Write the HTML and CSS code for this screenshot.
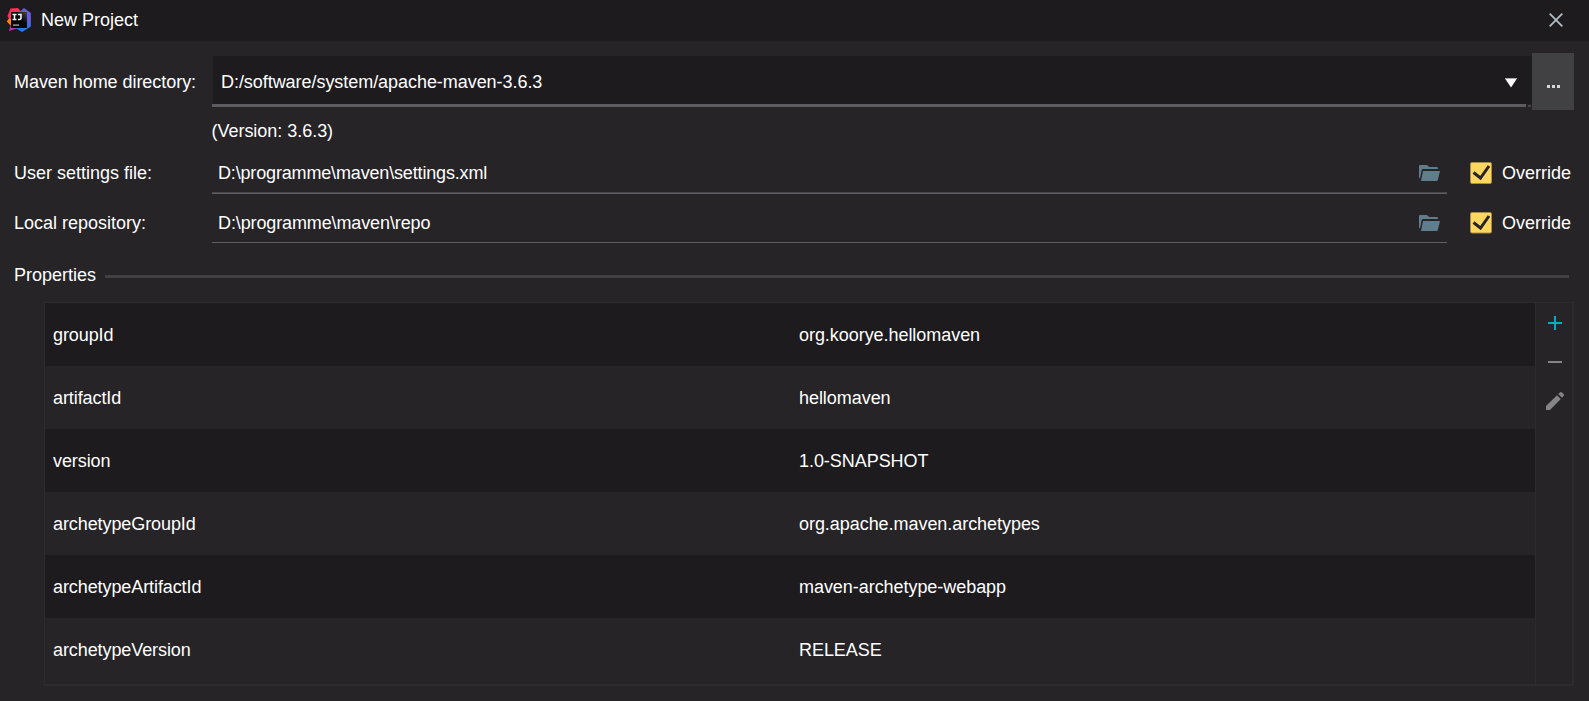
FILE: index.html
```
<!DOCTYPE html>
<html lang="en">
<head>
<meta charset="utf-8">
<title>New Project</title>
<link rel="stylesheet" href="styles.css">
</head>
<body>
<div class="dialog">
  <header class="titlebar">
    <svg class="logo" width="24" height="24" viewBox="0 0 24 24">
      <defs>
        <linearGradient id="warm" x1="0" y1="0" x2="0" y2="1"><stop offset="0" stop-color="#ff2d55"/><stop offset=".45" stop-color="#fe2f62"/><stop offset="1" stop-color="#a03bc8"/></linearGradient>
        <linearGradient id="cool" x1="1" y1="0" x2=".6" y2="1"><stop offset="0" stop-color="#4a6ae6"/><stop offset=".4" stop-color="#6a5bdc"/><stop offset="1" stop-color="#1f78ef"/></linearGradient>
        <linearGradient id="tile" x1="1" y1="0" x2="0" y2="1"><stop offset="0" stop-color="#4a4850"/><stop offset=".4" stop-color="#08080a"/><stop offset="1" stop-color="#000"/></linearGradient>
      </defs>
      <path fill="#fc801d" d="M3 9 0 13.500 3.500 17.500 6 16V9z"/>
      <path fill="url(#warm)" d="M3.500.5 11 0 15 5V19L2 23 4.500 15 .500 8z"/>
      <path fill="url(#cool)" d="M13 3.500 17 0 23.900 5V18.500L15 24 8.500 20z"/>
      <path fill="#fc801d" d="M2.500 10 0 13.500 4 17V12z"/>
      <path fill="url(#tile)" d="M4 4h16v16H4z"/>
      <path fill="none" stroke="#fff" stroke-width="1.500" d="M5.500 6.600h4M7.500 6.600v5M5.500 11.400h4M11 6.600h3v3.300q0 1.500-1.500 1.500H11"/>
      <path fill="#bbb" d="M6 16.500h6v1.200H6z"/>
    </svg>
    <h1 class="title">New Project</h1>
    <svg class="close" width="14" height="14" viewBox="0 0 14 14"><path d="M.7.7l12.600 12.600M13.300.7.7 13.300"/></svg>
  </header>

  <main class="form">
    <div class="home-row">
      <span class="label">Maven home directory:</span>
      <div class="combo">
        <span class="combo-value">D:/software/system/apache-maven-3.6.3</span>
        <svg class="arrow" width="12" height="10" viewBox="0 0 12 10"><path fill="#fff" d="M0 .5h12L6 9.500z"/><path fill="#aaa" d="M0 0h12v1H0z"/></svg>
      </div>
      <button class="browse"><svg width="13" height="3" viewBox="0 0 13 3"><path fill="#d5d5da" d="M0 0h3v3H0zM5 0h3v3H5zM10 0h3v3h-3z"/></svg></button>
    </div>
    <div class="version">(Version: 3.6.3)</div>

    <div class="path-row">
      <span class="label">User settings file:</span>
      <div class="field thick">
        <span>D:\programme\maven\settings.xml</span>
        <svg class="folder" width="21" height="16" viewBox="0 0 21 16"><path d="M1 0h7l2.200 2H18q1 0 1 1.500V4H4Q3 4 2.700 5L1 13.500q-1-.5-1-1.500V1Q0 0 1 0zM4 6h17l-2.200 9q-.3 1-1.300 1H2z"/></svg>
      </div>
      <svg class="check" width="22" height="22" viewBox="0 0 22 22"><rect x=".5" y=".5" width="21" height="21" rx="1.500"/><path d="M3.500 10.500 10.500 16 19 4"/></svg>
      <span class="override">Override</span>
    </div>
    <div class="path-row">
      <span class="label">Local repository:</span>
      <div class="field thin">
        <span>D:\programme\maven\repo</span>
        <svg class="folder" width="21" height="16" viewBox="0 0 21 16"><path d="M1 0h7l2.200 2H18q1 0 1 1.500V4H4Q3 4 2.700 5L1 13.500q-1-.5-1-1.500V1Q0 0 1 0zM4 6h17l-2.200 9q-.3 1-1.300 1H2z"/></svg>
      </div>
      <svg class="check" width="22" height="22" viewBox="0 0 22 22"><rect x=".5" y=".5" width="21" height="20.500" rx="1.500"/><path d="M3.500 10.500 10.500 16 19 4"/></svg>
      <span class="override">Override</span>
    </div>

    <div class="section"><span>Properties</span><i class="rule"></i></div>

    <div class="panel">
      <div class="table">
        <div class="row"><span>groupId</span><span>org.koorye.hellomaven</span></div>
        <div class="row"><span>artifactId</span><span>hellomaven</span></div>
        <div class="row"><span>version</span><span>1.0-SNAPSHOT</span></div>
        <div class="row"><span>archetypeGroupId</span><span>org.apache.maven.archetypes</span></div>
        <div class="row"><span>archetypeArtifactId</span><span>maven-archetype-webapp</span></div>
        <div class="row"><span>archetypeVersion</span><span>RELEASE</span></div>
      </div>
      <div class="tools">
        <svg width="14" height="14" viewBox="0 0 14 14"><path fill="#00acc1" d="M6 0h2v6h6v2H8v6H6V8H0V6h6z"/></svg>
        <svg width="14" height="2" viewBox="0 0 14 2"><path fill="#858585" d="M0 0h14v2H0z"/></svg>
        <svg width="18" height="18" viewBox="0 0 18 18"><path fill="#858585" d="M0 14 11 3.200 14.800 7 4 18H0zM12.200 2 14 .4q1-.8 2 0l1.600 1.600q.8 1 0 2L16 5.800z"/></svg>
      </div>
    </div>
  </main>
</div>
</body>
</html>
```
FILE: styles.css
```
* { box-sizing: border-box; }
body {
  margin: 0;
  background: #262427;
  color: #fff;
  font: 18px/20px "Liberation Sans", Arial, sans-serif;
}
svg { display: block; flex: none; }
.dialog { width: 1589px; height: 701px; overflow: hidden; }
.titlebar {
  display: flex;
  align-items: flex-start;
  height: 41px;
  padding: 8px 26px 0 7px;
  background: #1d1b1e;
}
.title { margin: 2px auto 0 10px; font-size: 18px; font-weight: 400; }
.close { margin-top: 5px; fill: none; stroke: #b0bec5; stroke-width: 1.8; }
.form { padding: 12px 15px 0 14px; }
.home-row { display: flex; height: 57px; }
.home-row .label { padding-top: 19px; letter-spacing: -.05px; }
.label { flex: none; width: 198px; white-space: nowrap; }
.combo {
  flex: 1;
  display: flex;
  align-items: flex-start;
  height: 51px;
  margin-top: 3px;
  padding: 16px 15px 0 9px;
  background: linear-gradient(#5e5c60, #5e5c60) 0 48px / 1314px 3px no-repeat,
              linear-gradient(#49474b, #49474b) 1316px 49px / 3px 2px no-repeat,
              linear-gradient(#1d1b1e, #1d1b1e) 100% 0 / calc(100% - 1px) 48px no-repeat;
}
.combo-value { flex: 1; letter-spacing: -.05px; }
.arrow { margin-top: 6px; }
.browse {
  display: flex;
  justify-content: center;
  width: 42px;
  padding: 32px 0 0 1px;
  border: 0;
  background: #414042;
}
.version { padding: 11px 0 0 197.5px; letter-spacing: -.03px; }
.path-row { display: flex; height: 50px; padding-top: 22px; }
.field {
  flex: none;
  display: flex;
  justify-content: space-between;
  width: 1235px;
  height: 31px;
  padding: 0 7px 0 6px;
  border-bottom: 1px solid #605e62;
  letter-spacing: -.16px;
}
.field.thick { box-shadow: inset 0 -1px #49474b; }
.field.thin { height: 30px; letter-spacing: -.12px; }
.folder { margin-top: 2px; fill: #607d8b; }
.check { margin: -1px 10px 0 23px; }
.check rect { fill: #ffd75e; stroke: #a68e4a; }
.check path { fill: none; stroke: #262427; stroke-width: 3; }
.section {
  display: flex;
  align-items: center;
  gap: 9px;
  height: 20px;
  margin-top: 24px;
}
.rule { flex: 1; height: 3px; margin: 3px 5px 0 0; background: #414042; }
.panel {
  display: flex;
  height: 384px;
  margin: 17px 0 0 30px;
  border: 1px solid #2d2b2e;
  border-width: 1px 2px 2px 1px;
}
.table { flex: 1; }
.row {
  display: grid;
  grid-template-columns: 746px 1fr;
  align-items: center;
  height: 63px;
  padding-left: 8px;
  letter-spacing: -.05px;
}
.row span:first-child { letter-spacing: -.09px; }
.row:nth-child(odd) { background: #1d1b1e; }
.tools {
  display: flex;
  flex-direction: column;
  align-items: center;
  width: 37px;
  padding: 13px 0 0 2px;
  border-left: 1px solid #2d2b2e;
}
.tools svg + svg { margin-top: 31px; }
.tools svg:last-child { margin-top: 29px; }
```
